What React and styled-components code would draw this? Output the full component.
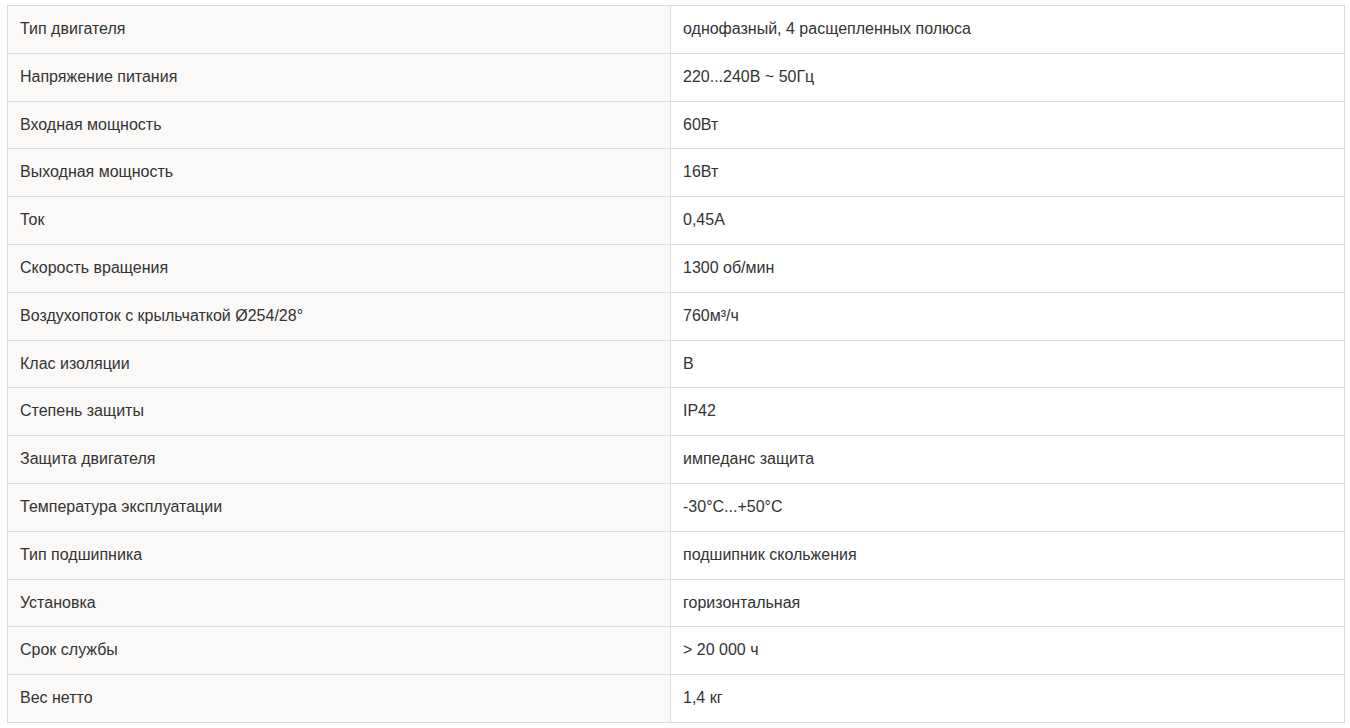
import React from 'react';
import styled, { createGlobalStyle } from 'styled-components';

const rows = [
    ['Тип двигателя', 'однофазный, 4 расщепленных полюса'],
    ['Напряжение питания', '220...240В ~ 50Гц'],
    ['Входная мощность', '60Вт'],
    ['Выходная мощность', '16Вт'],
    ['Ток', '0,45А'],
    ['Скорость вращения', '1300 об/мин'],
    ['Воздухопоток с крыльчаткой Ø254/28°', '760м³/ч'],
    ['Клас изоляции', 'В'],
    ['Степень защиты', 'IP42'],
    ['Защита двигателя', 'импеданс защита'],
    ['Температура эксплуатации', '-30°С...+50°С'],
    ['Тип подшипника', 'подшипник скольжения'],
    ['Установка', 'горизонтальная'],
    ['Срок службы', '> 20 000 ч'],
    ['Вес нетто', '1,4 кг'],
];

export default function App() {
    return (
        <>
            <GlobalStyle />
            <Wrap>
                <SpecTable>
                    <colgroup>
                        <col style={{ width: 663 }} />
                        <col />
                    </colgroup>
                    <tbody>
                        {rows.map(([name, value]) => (
                            <tr key={name}>
                                <Cell $label>{name}</Cell>
                                <Cell>{value}</Cell>
                            </tr>
                        ))}
                    </tbody>
                </SpecTable>
            </Wrap>
        </>
    );
}

const GlobalStyle = createGlobalStyle`
    body{
        margin: 0;
        background: #fff;
        font-family: "Liberation Sans", Arial, sans-serif;
    }
`;

const Wrap = styled.div`
    padding: 5px 5px 0 7px;
`;

const SpecTable = styled.table`
    width: 1338px;
    border-collapse: collapse;
    table-layout: fixed;
`;

const Cell = styled.td`
    border: 1px solid #dddddd;
    background: ${p => (p.$label ? '#faf9f7' : '#ffffff')};
    color: #333333;
    font-size: 16px;
    line-height: 22.8px;
    padding: 12px 12px;
    text-align: left;
    vertical-align: middle;
`;
